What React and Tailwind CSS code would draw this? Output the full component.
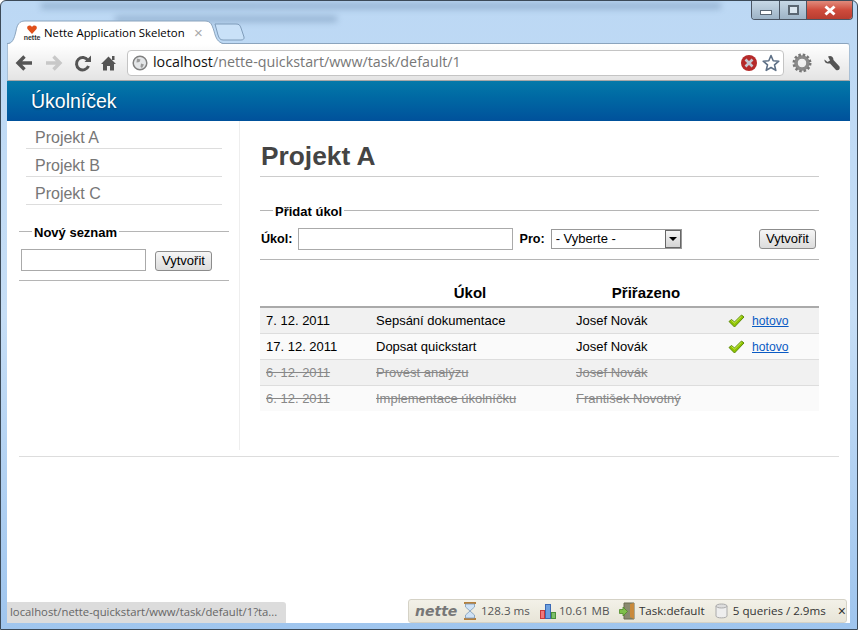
import React from 'react';

const ui = "font-['Liberation_Sans',Arial,sans-serif]";
const win = "font-['Open_Sans','Noto_Sans',sans-serif]";

const rows = [
  { date: '7. 12. 2011', task: 'Sepsání dokumentace', who: 'Josef Novák', open: true },
  { date: '17. 12. 2011', task: 'Dopsat quickstart', who: 'Josef Novák', open: true },
  { date: '6. 12. 2011', task: 'Provést analýzu', who: 'Josef Novák', open: false },
  { date: '6. 12. 2011', task: 'Implementace úkolníčku', who: 'František Novotný', open: false },
];

const Check = () => (
  <svg width="17" height="14" viewBox="0 0 17 14" className="shrink-0">
    <path d="M1 7.500 3.500 5.500 6.500 8 13.500 1 16 3 6.500 13Z" fill="#8fc400" stroke="#5d8a0a" strokeWidth="1" strokeLinejoin="round" />
    <path d="M3.500 6.500 6.500 9 13.500 2.200" fill="none" stroke="#c8ea5a" strokeWidth="1" />
  </svg>
);

const Button = () => (
  <button className="h-[20px] w-[57px] rounded-[3px] border border-[#8c8c8c] bg-gradient-to-b from-[#f6f6f6] to-[#dcdcdc] text-[13px] leading-none text-black">
    Vytvořit
  </button>
);

const Tabstrip = () => (
  <div className="relative h-[42px] shrink-0">
    {/* desktop behind the glass, too blurred to read */}
    <div className="absolute left-[34px] top-[2px] h-[6px] w-[680px] bg-[#5a7a9c] opacity-40 blur-[3px]" />
    <div className="absolute left-[108px] top-[15px] h-[6px] w-[222px] bg-[#5a7a9c] opacity-40 blur-[3px]" />
    <svg width="240" height="24" viewBox="0 0 240 24" className="absolute left-0 top-[19px]">
      <path d="M0 24C5 24 7 20 9 11 10 5 12 1 18 1H198C204 1 205 5 207 11 209 19 211 22 216 24Z" fill="#fff" />
      <path d="M0 23.500C5 23.500 7 20 9 11 10 5 12 1 18 1H198C204 1 205 5 207 11 209 19 211 22 216 23.500" fill="none" stroke="#8ba4bd" />
      <path d="M208 4H229C232 4 233 5 234 8L237 17C237.500 19 236 20 234 20H216C213 20 212 18 211 15Z" fill="#c9e1f8" stroke="#7f9cba" />
    </svg>
    <div className="absolute left-[16px] top-[24px] flex h-[16px] w-[18px] flex-col items-center">
      <svg width="10" height="9" viewBox="0 0 10 9"><path d="M5 9 0.500 4C-1 1 3 -1 5 2 7 -1 11 1 9.500 4Z" fill="#e0501a" /></svg>
      <span className={`${ui} text-[7px] font-bold leading-[7px] text-[#333]`}>nette</span>
    </div>
    <span className={`${win} absolute left-[37px] top-[24px] whitespace-nowrap text-[11.400px] leading-[15px] text-black`}>Nette Application Skeleton</span>
    <span className={`${ui} absolute left-[187px] top-[24px] text-[15px] leading-[15px] text-[#aaa]`}>×</span>
    {/* window controls */}
    <div className="absolute right-[-3px] top-0 flex h-[19px] w-[102px] overflow-hidden rounded-b-[4px] border border-t-0 border-[#4a5563]">
      <div className="flex w-[28px] items-end justify-center border-r border-[#4a5563] bg-gradient-to-b from-[#c7d8e6] to-[#9db3c6] pb-[4px]">
        <div className="h-[5px] w-[12px] border border-[#5a6672] bg-white" />
      </div>
      <div className="flex w-[27px] items-center justify-center border-r border-[#4a5563] bg-gradient-to-b from-[#c7d8e6] to-[#9db3c6]">
        <div className="h-[10px] w-[11px] border-2 border-[#5a6672] bg-[#dbe6ef]" />
      </div>
      <div className="flex flex-1 items-center justify-center bg-gradient-to-b from-[#e08a7c] via-[#cf4b3c] to-[#b83d30]">
        <svg width="14" height="11" viewBox="0 0 14 11"><path d="M2.500 1.500 11.500 9.500M11.500 1.500 2.500 9.500" stroke="#fff" strokeWidth="3" /></svg>
      </div>
    </div>
  </div>
);

const Toolbar = () => (
  <div className="flex h-[38px] shrink-0 items-center rounded-tr-[3px] border border-x-[#a9c0d6] border-b-[#a8a8a8] border-t-[#8ba4bd] bg-gradient-to-b from-white to-[#e4e4e4] pt-[1px]">
    <svg width="119" height="24" viewBox="0 0 119 24" className="shrink-0">
      <path d="M10 12H24M16.500 5.500 10 12 16.500 18.500" fill="none" stroke="#555" strokeWidth="3.400" />
      <path d="M38 12H52M45.500 5.500 52 12 45.500 18.500" fill="none" stroke="#c8c8c8" strokeWidth="3.400" />
      <path d="M80 9.500A6.200 6.200 0 1 0 80.500 15" fill="none" stroke="#555" strokeWidth="3" />
      <path d="M76.500 11H83V4.500Z" fill="#555" />
      <path d="M93 13 100.500 5.500 108 13H106V19.500H102V15H99V19.500H95V13Z" fill="#555" />
      <path d="M104 5H106.500V9H104Z" fill="#555" />
    </svg>
    <div className="flex h-[26px] w-[657px] items-center rounded-[4px] border border-[#c4c4c4] bg-white pl-[4px] pr-[3px]">
      <svg width="16" height="16" viewBox="0 0 16 16" className="shrink-0">
        <circle cx="8" cy="8" r="6.800" fill="#e4e6e8" stroke="#808080" strokeWidth="1.500" />
        <path d="M5 3.500 8.500 4.500 7.500 7 4.500 7.500ZM9 8.500 12 9.500 10 13 8.500 12Z" fill="#9a9a9a" />
      </svg>
      <span className={`${win} ml-[5px] whitespace-nowrap text-[14.300px] leading-none text-[#111]`}>
        localhost<span className="text-[#777]">/nette-quickstart/www/task/default/1</span>
      </span>
      <svg width="16" height="16" viewBox="0 0 16 16" className="ml-auto shrink-0">
        <circle cx="8" cy="8" r="8" fill="#b52a2a" />
        <path d="M4.500 4.500 11.500 11.500M11.500 4.500 4.500 11.500" stroke="#c5c9d3" strokeWidth="2.600" />
      </svg>
      <svg width="18" height="18" viewBox="0 0 18 18" className="ml-[5px] shrink-0">
        <path d="M9 1.500 11.200 6.700 16.800 7.200 12.500 10.900 13.800 16.400 9 13.500 4.200 16.400 5.500 10.900 1.200 7.200 6.800 6.700Z" fill="#fff" stroke="#5e7086" strokeWidth="1.600" strokeLinejoin="round" />
      </svg>
    </div>
    <svg width="20" height="20" viewBox="0 0 20 20" className="ml-[8px] shrink-0">
      <circle cx="10" cy="10" r="6" fill="none" stroke="#8a8a8a" strokeWidth="3.600" />
      <circle cx="10" cy="10" r="8.300" fill="none" stroke="#777" strokeWidth="2.400" strokeDasharray="2.500 1.900" />
      <circle cx="10" cy="10" r="3.300" fill="none" stroke="#eee" strokeWidth="1.200" />
    </svg>
    <svg width="18" height="18" viewBox="0 0 18 18" className="ml-[11px] shrink-0">
      <path d="M1.500 5.500 4.500 8 7 6.500 5 2.500C7.500 1 10.500 2.500 10.500 6L16.500 12.500C17.500 15 15.500 17 13 16L7 9.500C3.500 10 1 8 1.500 5.500Z" fill="#555" />
    </svg>
  </div>
);

const Sidebar = () => (
  <aside className="w-[233px] shrink-0 border-r border-[#eee] pl-[12px] pr-[10px]">
    <ul className="mx-[7px]">
      {['Projekt A', 'Projekt B', 'Projekt C'].map((name) => (
        <li key={name} className="h-[28px] border-b border-[#ddd] pl-[9px] text-[16px] leading-[33px] text-[#777]">
          {name}
        </li>
      ))}
    </ul>
    <fieldset className="mt-[19px] w-[210px] border-y border-[#b5b5b5] pb-[8px] pl-[2px]">
      <legend className="ml-[11px] h-[15px] px-[2px] text-[13px] font-bold leading-[17px] text-black">Nový seznam</legend>
      <div className="mt-[9px] flex items-center">
        <input className="h-[22px] w-[125px] border border-[#aaa] bg-white" />
        <div className="ml-[9px]"><Button /></div>
      </div>
    </fieldset>
  </aside>
);

const TaskTable = () => (
  <table className="mt-[20px] w-[559px] table-fixed border-collapse text-[13px] text-black">
    <thead>
      <tr className="h-[27px] border-b-2 border-[#aaa] text-[15px]">
        <th className="w-[110px]" />
        <th className="w-[200px] text-center font-bold">Úkol</th>
        <th className="w-[152px] text-center font-bold">Přiřazeno</th>
        <th />
      </tr>
    </thead>
    <tbody>
      {rows.map((row, i) => (
        <tr
          key={row.task}
          className={`h-[26px] leading-[20px] ${i < 3 ? 'border-b border-[#ddd]' : ''} ${i % 2 === 0 ? 'bg-[#f1f1f1]' : 'bg-[#fafafa]'} ${row.open ? '' : 'text-[#888] line-through'}`}
        >
          <td className="pl-[6px] pt-[2px]">{row.date}</td>
          <td className="pl-[6px] pt-[2px]">{row.task}</td>
          <td className="pl-[6px] pt-[2px]">{row.who}</td>
          <td className="pl-[6px] pt-[2px]">
            {row.open && (
              <div className="flex items-center gap-[7px]">
                <Check />
                <a href="#" className="text-[12.200px] text-[#0a5bc4] underline">hotovo</a>
              </div>
            )}
          </td>
        </tr>
      ))}
    </tbody>
  </table>
);

const Main = () => (
  <main className="min-w-0 flex-1 pb-[39px] pl-[20px]">
    <h1 className="mt-[17px] h-[39px] w-[559px] border-b border-[#ccc] text-[26.300px] font-bold leading-[36px] text-[#444]">
      <span className="ml-[1px]">Projekt A</span>
    </h1>
    <fieldset className="mt-[26px] w-[559px] border-y border-[#b5b5b5] pb-[9px]">
      <legend className="ml-[13px] h-[15px] px-[2px] text-[13px] font-bold leading-[17px] text-black">Přidat úkol</legend>
      <div className="mt-[10px] flex items-center text-[12.600px] font-bold">
        <label className="ml-[1px] pt-[1px]">Úkol:</label>
        <input className="ml-[6px] h-[22px] w-[215px] border border-[#aaa] bg-white" />
        <label className="ml-[6px] pt-[1px]">Pro:</label>
        <div className="ml-[6px] flex h-[20px] w-[131px] items-center border border-[#999] bg-white pl-[4px] text-[13px] font-normal">
          - Vyberte -
          <div className="ml-auto flex h-[18px] w-[16px] items-center justify-center border border-[#666] bg-gradient-to-b from-[#f4f4f4] to-[#d4d4d4]">
            <div className="h-0 w-0 border-x-[4px] border-t-[4px] border-x-transparent border-t-black" />
          </div>
        </div>
        <div className="ml-auto mr-[3px] font-normal"><Button /></div>
      </div>
    </fieldset>
    <TaskTable />
  </main>
);

const DebugBar = () => (
  <div className={`${win} absolute left-[407px] top-[598px] flex h-[24px] w-[439px] items-center whitespace-nowrap rounded-[3px] border border-[#d5d2c6] bg-gradient-to-b from-[#f3f1e8] to-[#e8e5d8] pl-[6px] text-[11.600px] text-[#333]`}>
    <span className="w-[43px] font-['DejaVu_Sans',sans-serif] text-[14px] font-bold italic leading-none text-[#777]">nette</span>
    <svg width="14" height="18" viewBox="0 0 14 18" className="ml-[5px] shrink-0">
      <path d="M1 1H13M1 17H13" stroke="#b5803c" strokeWidth="2" />
      <path d="M2.500 2H11.500V5L7 9 11.500 13V16H2.500V13L7 9 2.500 5Z" fill="#cfe2f5" stroke="#7d9ab8" strokeWidth=".8" />
    </svg>
    <span className="ml-[4px] w-[51px] text-[#555]">128.3 ms</span>
    <svg width="16" height="16" viewBox="0 0 16 16" className="ml-[8px] shrink-0">
      <rect x=".5" y="7.500" width="4" height="8" fill="#f0787a" stroke="#c93a3a" />
      <rect x="5.500" y="1.500" width="5" height="14" fill="#6ca0e0" stroke="#3a69b5" />
      <rect x="11.500" y="9.500" width="4" height="6" fill="#7cc06a" stroke="#4a8f3a" />
    </svg>
    <span className="ml-[3px] w-[52px] text-[#555]">10.61 MB</span>
    <svg width="16" height="18" viewBox="0 0 16 18" className="ml-[8px] shrink-0">
      <path d="M5 1H15V17H5Z" fill="#8a8a70" stroke="#6a6a50" />
      <path d="M11 2 15 1V17L11 15Z" fill="#c98a3c" />
      <path d="M0.500 7.500H4V5L8.500 9.500 4 14V11.500H0.500Z" fill="#7fc04a" stroke="#4f8a2a" strokeWidth=".8" />
    </svg>
    <span className="ml-[4px] w-[66px]">Task:default</span>
    <svg width="13" height="16" viewBox="0 0 13 16" className="ml-[10px] shrink-0">
      <path d="M1 3V13C1 15.500 12 15.500 12 13V3Z" fill="#eee" stroke="#aaa" />
      <ellipse cx="6.500" cy="3" rx="5.500" ry="2" fill="#ddd" stroke="#aaa" />
    </svg>
    <span className="ml-[5px] w-[96px]">5 queries / 2.9ms</span>
    <span className={`${ui} ml-[9px] text-[14px] leading-none`}>×</span>
  </div>
);

const App = () => (
  <div className={`${ui} relative flex h-[630px] w-[858px] flex-col overflow-hidden rounded-t-[6px] border border-[#3c4a58] bg-gradient-to-b from-[#bcd8f4] via-[#c6def6] to-[#9fc5ee] pb-[6px] pl-[6px] pr-[7px]`}>
    <Tabstrip />
    <Toolbar />
    <div className="flex min-h-0 flex-1 flex-col bg-white">
      <header className="flex h-[40px] shrink-0 items-center bg-gradient-to-b from-[#0579a9] to-[#00519b] pl-[24px] pt-[1px] text-[19.500px] text-white [text-shadow:0_1px_2px_rgba(0,0,0,.4)]">
        Úkolníček
      </header>
      <div className="flex">
        <Sidebar />
        <Main />
      </div>
      <div className="ml-[12px] mr-[11px] mt-[6px] border-t border-[#ddd]" />
    </div>
    {/* status bubble */}
    <div className="absolute left-[6px] top-[601px] flex h-[21px] w-[279px] items-center rounded-tr-[3px] bg-[#dcdcdc] pl-[3px] text-[11.300px] text-[#666]">
      <span className={`${win} whitespace-nowrap`}>localhost/nette-quickstart/www/task/default/1?ta...</span>
    </div>
    <DebugBar />
  </div>
);

export default App;
